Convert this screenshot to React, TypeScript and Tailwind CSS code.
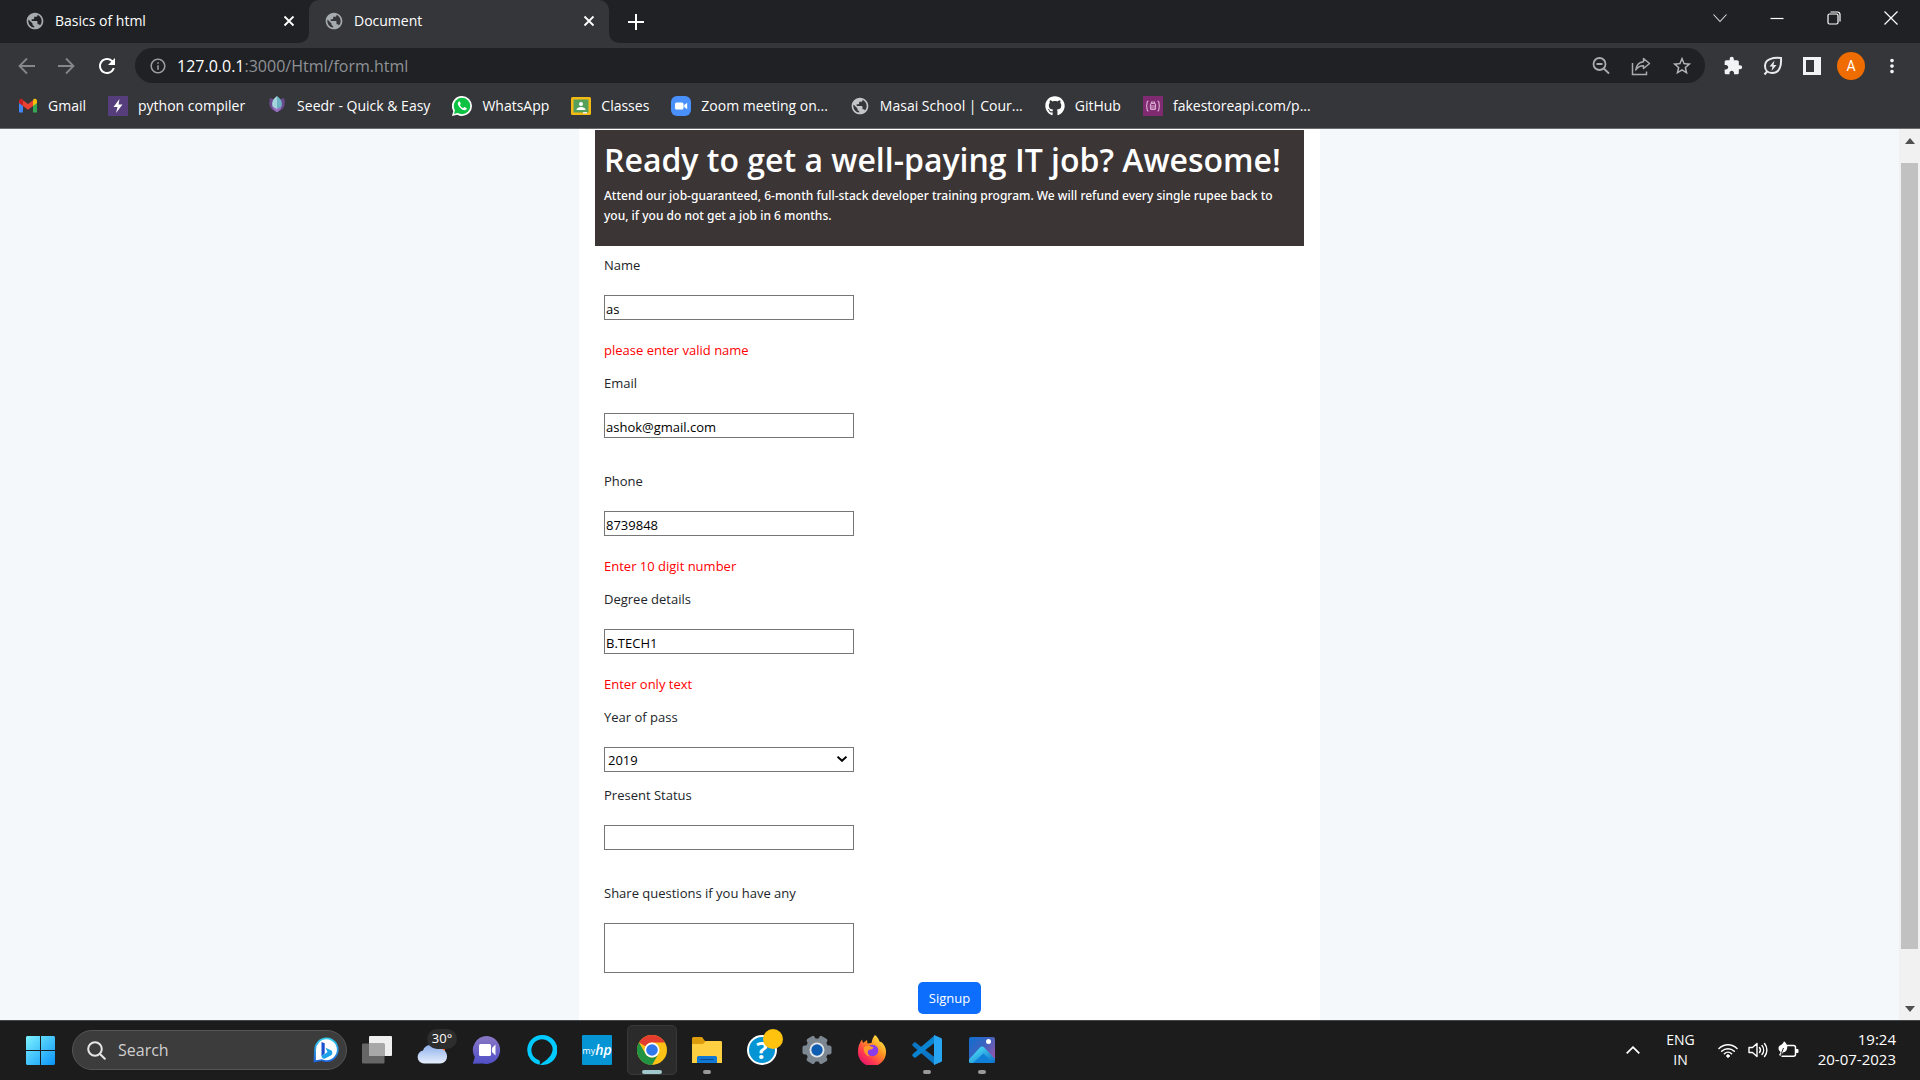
import type { ReactNode } from "react";
import { FaGithub } from "react-icons/fa";
import {
  MdExtension,
  MdInfoOutline,
  MdMoreVert,
  MdPublic,
  MdRefresh,
  MdStarOutline,
} from "react-icons/md";

/* ---------- Small drawings ---------- */

function CloseGlyph() {
  return (
    <svg viewBox="0 0 12 12" className="size-3" fill="none" stroke="#fff" strokeWidth="1.8">
      <path d="M1.5 1.5l9 9M10.5 1.5l-9 9" />
    </svg>
  );
}

function BackIcon({ flip = false }: { flip?: boolean }) {
  return (
    <svg viewBox="0 0 20 20" className={flip ? "size-5 rotate-180" : "size-5"} fill="none" stroke="#85878a" strokeWidth="1.8">
      <path d="M18 10H3M10 2.5L2.5 10l7.5 7.5" />
    </svg>
  );
}

function ZoomOutIcon() {
  return (
    <svg viewBox="0 0 20 20" className="size-5" fill="none" stroke="#a9abae" strokeWidth="1.8">
      <circle cx="8.500" cy="8" r="6" />
      <path d="M5.500 8h6M12.800 12.500l5.200 5" />
    </svg>
  );
}

function ShareIcon() {
  return (
    <svg viewBox="0 0 20 20" className="size-5" fill="none" stroke="#a9abae" strokeWidth="1.5">
      <path d="M1.5 7v11.5h14v-3" />
      <path d="M12.500 2.500l6 5-6 5V9.800c-3.500 0-6 1.200-7.700 4.200.4-4 2.900-7.800 7.700-8.300z" strokeLinejoin="round" />
    </svg>
  );
}

function LeafIcon() {
  return (
    <svg viewBox="0 0 20 20" className="size-5" fill="none" stroke="#e8eaed" strokeWidth="2">
      <path d="M18 2c-8-.6-16 .8-16 8 0 4.400 3 7 7 7 8 0 9.500-8 9-15zM4.500 15L1.500 18.500" />
      <path d="M11.500 4.500L6.500 10.500h3l-1 4.500 5-6h-3z" fill="#e8eaed" stroke="none" />
    </svg>
  );
}

function GmailIcon() {
  return (
    <svg viewBox="0 0 20 16" className="h-4 w-5">
      <path d="M1 3v11.500h4V6.500z" fill="#4285f4" />
      <path d="M19 3v11.500h-4V6.500z" fill="#34a853" />
      <path d="M15 3.200V8l4-3V3c0-2-2.200-2.900-3.600-1.800z" fill="#fbbc04" />
      <path d="M5 8V2.200l5 3.800 5-3.800V8l-5 3.800z" fill="#ea4335" />
      <path d="M1 3v2l4 3V1.800L4.600 1.200C3.200.1 1 1 1 3z" fill="#c5221f" />
    </svg>
  );
}

function PythonCompilerIcon() {
  return (
    <svg viewBox="0 0 20 20" className="size-5">
      <rect width="20" height="20" fill="#563d7c" />
      <path d="M11.500 3L5.500 11h4l-1.500 6 6.500-8.500h-4z" fill="#fff" />
    </svg>
  );
}

function SeedrIcon() {
  return (
    <svg viewBox="0 0 20 20" className="size-5">
      <path d="M3 2c-2 7 0 12 7 14 7-2 9-7 7-14l-3 1H6z" fill="#6a4a8c" />
      <path d="M10 0v16C3 11 4 4 10 0z" fill="#a5d5dc" />
      <path d="M10 0c6 4 7 11 0 16z" fill="#6fb4c4" />
      <path d="M5.500 10.500c.5 2.500 2 4.500 4.500 5.500 2.500-1 4-3 4.500-5.500L10 13z" fill="#9a6fc0" />
    </svg>
  );
}

function WhatsAppIcon() {
  return (
    <svg viewBox="0 0 20 20" className="size-5">
      <path d="M10 0a10 10 0 0 1 0 20c-1.700 0-3.300-.4-4.700-1.200L0 20l1.300-5A10 10 0 0 1 10 0z" fill="#fff" />
      <circle cx="10" cy="10" r="8.300" fill="#0dc143" />
      <path d="M3.500 12l-1.500 6 5-1.500z" fill="#0dc143" />
      <path d="M7 5.500c-1.800 1-1.500 3 .4 5.400 2 2.400 4.600 3.900 6.200 3.100 1.200-.6 1.400-1.700.9-2l-2-1c-.6-.2-1 1.200-1.400 1.100-1-.3-2.800-1.800-3.200-2.900-.1-.4 1-.9.8-1.500L8 5.700c-.2-.4-.7-.3-1-.2z" fill="#fff" />
    </svg>
  );
}

function ClassesIcon() {
  return (
    <svg viewBox="0 0 20 20" className="size-5">
      <rect y="1" width="20" height="18" rx="1.500" fill="#f5ba14" />
      <rect x="2.500" y="3.500" width="15" height="13" fill="#57a05c" />
      <circle cx="10" cy="8" r="2" fill="#fff" />
      <path d="M5.500 14c0-4 9-4 9 0z" fill="#fff" />
      <path d="M12 16h4v1.500h-4z" fill="#eee" />
    </svg>
  );
}

function ZoomIcon() {
  return (
    <svg viewBox="0 0 20 20" className="size-5">
      <rect width="20" height="20" rx="6" fill="#4a90fb" />
      <rect x="4" y="6.500" width="8.500" height="7" rx="1.500" fill="#fff" />
      <path d="M13.200 9l3-2.300v6.600l-3-2.300z" fill="#fff" />
    </svg>
  );
}

function FakeStoreIcon() {
  return (
    <svg viewBox="0 0 20 20" className="size-5">
      <rect width="20" height="20" fill="#7f2a71" />
      <g fill="none" stroke="#d9a9d1" strokeWidth="1.200">
        <path d="M5.500 5c-1.500 0-1.500 1-1.500 2.500S3.500 10 3 10c.5 0 1 1 1 2.500S4 15 5.500 15M14.500 5C16 5 16 6 16 7.500s.5 2.500 1 2.500c-.5 0-1 1-1 2.500S16 15 14.500 15" />
        <rect x="7.500" y="7.500" width="5" height="6" rx="1" />
        <path d="M8.500 7.500V6h3v1.500M8 10h4M8 12h4" />
      </g>
    </svg>
  );
}

function WindowsIcon() {
  return (
    <svg viewBox="0 0 29 29" className="size-[29px]">
      <defs>
        <linearGradient id="win" gradientUnits="userSpaceOnUse" x1="0" y1="0" x2="29" y2="29">
          <stop offset="0" stopColor="#7df3ff" />
          <stop offset="1" stopColor="#0a93f8" />
        </linearGradient>
      </defs>
      <path d="M1 0h13v14H0V1zM15 0h13l1 1v13H15zM0 15h14v14H1l-1-1zM15 15h14v13l-1 1H15z" fill="url(#win)" />
    </svg>
  );
}

function BingIcon() {
  return (
    <svg viewBox="0 0 26 26" className="size-[26px]">
      <defs>
        <linearGradient id="bing" x1="0" y1="0" x2="0" y2="1">
          <stop offset="0" stopColor="#35d0f0" />
          <stop offset="1" stopColor="#1c5fd6" />
        </linearGradient>
      </defs>
      <path d="M13.500.5a12.300 12.300 0 1 1-5 23.600L.5 25.500 1.200 13A12.300 12.300 0 0 1 13.500.5z" fill="url(#bing)" />
      <path d="M13.500 2.300a10.500 10.500 0 1 1-4.600 20l-6 1L3 13A10.500 10.500 0 0 1 13.500 2.300z" fill="#fff" />
      <path d="M8.500 5l3.200 1.300v10.200l-3.200 2.700z" fill="#1b4fd0" />
      <path d="M8.500 18.800l4-2.300 2-1.400-2-4.300 6 2.600c1.500 1.800 1 4-.7 5.200L12 21.500c-2 .7-3.500-.8-3.500-2.700z" fill="#1da1e8" />
    </svg>
  );
}

function TaskViewIcon() {
  return (
    <svg viewBox="0 0 30 30" className="size-[30px]">
      <rect x="7" y="1" width="23" height="20" rx="1" fill="#efefef" />
      <rect x="0" y="8.500" width="22.500" height="20" rx="1" fill="#666666" />
      <path d="M7 8.500h15.500V21H7z" fill="#a8a8a8" />
    </svg>
  );
}

function WeatherIcon() {
  return (
    <svg viewBox="0 0 30 30" className="size-[30px]">
      <defs>
        <linearGradient id="cloud" x1="0" y1="0" x2="0" y2="1">
          <stop offset="0" stopColor="#8fb0ec" />
          <stop offset="1" stopColor="#e6effc" />
        </linearGradient>
      </defs>
      <path d="M19 13h9v6h-9z" fill="#f7630c" />
      <path d="M7 28.500a6.500 6.500 0 0 1-1-12.900A8 8 0 0 1 20.500 14a7.500 7.500 0 0 1 9.500 7.500c0 4-3 7-7 7z" fill="url(#cloud)" />
    </svg>
  );
}

function ChatIcon() {
  return (
    <svg viewBox="0 0 30 30" className="size-[30px]">
      <defs>
        <linearGradient id="chat" x1="0" y1="0" x2="0" y2="1">
          <stop offset="0" stopColor="#8a78c4" />
          <stop offset="1" stopColor="#4f4fc8" />
        </linearGradient>
      </defs>
      <path d="M15 1a14 14 0 1 1-4.500 27.500L.8 28.800 2.800 22A14 14 0 0 1 15 1z" fill="url(#chat)" />
      <rect x="7" y="9" width="12" height="12" rx="1.500" fill="#fff" />
      <path d="M20 13l3.500-3.500v11L20 17z" fill="#fff" />
    </svg>
  );
}

function AlexaIcon() {
  return (
    <svg viewBox="0 0 30 30" className="size-[30px]">
      <path d="M15 0a15 15 0 0 0-2.200 29.800v-3.200c0-.8-.5-1.200-1.200-1.500A10.700 10.700 0 1 1 25.500 12.500c1 7-4.500 12-12.500 17.300A15 15 0 1 0 15 0z" fill="#00caff" />
    </svg>
  );
}

function ChromeIcon() {
  return (
    <svg viewBox="0 0 30 30" className="size-[30px]">
      <circle cx="15" cy="15" r="15" fill="#fbc116" />
      <path d="M15 0a15 15 0 0 1 13 7.500H15a7.500 7.500 0 0 0-6.500 3.700L2 7.500A15 15 0 0 1 15 0z" fill="#e33b2e" />
      <path d="M2 7.500l6.500 11.200A7.500 7.500 0 0 0 21.500 18.700L15 30A15 15 0 0 1 2 7.500z" fill="#229342" />
      <circle cx="15" cy="15" r="7.500" fill="#fff" />
      <circle cx="15" cy="15" r="5.800" fill="#2f77ea" />
    </svg>
  );
}

function ExplorerIcon() {
  return (
    <svg viewBox="0 0 30 30" className="size-[30px]">
      <path d="M0 3.500A1.500 1.500 0 0 1 1.500 2H10l3 4h15.500A1.500 1.500 0 0 1 30 7.500V12H0z" fill="#dc9c0c" />
      <path d="M0 9h11l3-3h14.500A1.500 1.500 0 0 1 30 7.500V28H0z" fill="#fdcf41" />
      <path d="M5 28v-5.500A1.500 1.500 0 0 1 6.500 21h17a1.500 1.500 0 0 1 1.500 1.500V28z" fill="#0f78d4" />
      <path d="M8.500 24.500h13" stroke="#0a4a8c" />
    </svg>
  );
}

function SettingsIcon() {
  return (
    <svg viewBox="0 0 30 30" className="size-[30px]">
      <g fill="#7d8791">
        <circle cx="15" cy="15" r="11.500" />
        <rect x="10.500" y="0.500" width="9" height="29" rx="2" transform="rotate(90 15 15)" />
        <rect x="10.500" y="0.500" width="9" height="29" rx="2" transform="rotate(30 15 15)" />
        <rect x="10.500" y="0.500" width="9" height="29" rx="2" transform="rotate(-30 15 15)" />
      </g>
      <circle cx="15" cy="15" r="7.500" fill="#e4e7ea" />
      <circle cx="15" cy="15" r="5.700" fill="#0f5db0" />
    </svg>
  );
}

function FirefoxIcon() {
  return (
    <svg viewBox="0 0 30 30" className="size-[30px]">
      <defs>
        <linearGradient id="fox" x1="1" y1="0" x2="0.200" y2="1">
          <stop offset="0.100" stopColor="#fff04a" />
          <stop offset="0.450" stopColor="#ff9020" />
          <stop offset="0.750" stopColor="#ff3850" />
          <stop offset="1" stopColor="#e01070" />
        </linearGradient>
      </defs>
      <path d="M18 0c2 1.500 4 4 4.500 6.500l2.500 1c3 3 4.200 6.500 4 10A14 14 0 0 1 1 17c-.2-4 .8-7.500 3-11l1-1.500L6 8l4-3 .5 3.500 4-.5C15 5 16 2 18 0z" fill="url(#fox)" />
      <circle cx="15.500" cy="15.500" r="5.800" fill="#8a3bea" />
      <path d="M7 12c3-1.500 6-1.500 9.500.5-1 2-3 2-5 2.500-1.500 3-.5 5 2 6.500-4 0-7.500-4-6.500-9.500z" fill="#ff9a28" />
    </svg>
  );
}

function VsCodeIcon() {
  return (
    <svg viewBox="0 0 30 30" className="size-[30px]">
      <path d="M1 8.500L3 7l20 15.500V30L.8 11c-.8-.8-.6-1.800.2-2.500z" fill="#0b76c4" />
      <path d="M1 21.500L3 23 23 7.500V0L.8 19c-.8.800-.6 1.800.2 2.500z" fill="#0a84d0" />
      <path d="M22 0l7 3c.6.300 1 .8 1 1.500v21c0 .7-.4 1.200-1 1.500l-7 3z" fill="#27a5f2" />
    </svg>
  );
}

function PhotosIcon() {
  return (
    <svg viewBox="0 0 30 30" className="size-[30px]">
      <defs>
        <linearGradient id="sky" x1="0" y1="0" x2="1" y2="0.800">
          <stop offset="0" stopColor="#0d6fd0" />
          <stop offset="0.500" stopColor="#3c62c0" />
          <stop offset="1" stopColor="#9a55a8" />
        </linearGradient>
        <linearGradient id="hill" x1="0" y1="0" x2="1" y2="1">
          <stop offset="0.200" stopColor="#48d6f6" />
          <stop offset="1" stopColor="#0b6cc4" />
        </linearGradient>
      </defs>
      <rect x="2" y="2" width="26" height="26" rx="2" fill="url(#sky)" />
      <path d="M2 24.500L13 12.500c1.300-1.400 3-1.400 4.300 0L28 24v2.500A1.500 1.500 0 0 1 26.500 28h-23A1.500 1.500 0 0 1 2 26.500z" fill="url(#hill)" />
      <path d="M6 28l10.500-9.500L26 28z" fill="#0f7fd8" />
      <circle cx="21.500" cy="6.500" r="2.500" fill="#fff" />
    </svg>
  );
}

function WifiIcon() {
  return (
    <svg viewBox="0 0 20 16" className="h-4 w-5" fill="none" stroke="#fff" strokeWidth="1.500" strokeLinecap="round">
      <path d="M1 6.500a12.700 12.700 0 0 1 18 0M3.700 9.200a9 9 0 0 1 12.600 0M6.400 11.800a5.200 5.200 0 0 1 7.200 0" />
      <circle cx="10" cy="14" r="1.300" fill="#fff" strokeWidth="1" />
    </svg>
  );
}

function SoundIcon() {
  return (
    <svg viewBox="0 0 20 18" className="h-[18px] w-5" fill="none" stroke="#fff" strokeWidth="1.400" strokeLinejoin="round" strokeLinecap="round">
      <path d="M1 6.500h3.500L9 2.500v13l-4.500-4H1z" />
      <path d="M11.500 6.500a4 4 0 0 1 0 5M14 4.500a7 7 0 0 1 0 9M16.500 2.500a10 10 0 0 1 0 13" />
    </svg>
  );
}

function BatteryIcon() {
  return (
    <svg viewBox="0 0 21 18" className="h-[18px] w-[21px]">
      <path d="M9 4.500h6.500a2 2 0 0 1 2 2v6.800a2 2 0 0 1-2 2H3.500" fill="none" stroke="#fff" strokeWidth="1.500" />
      <path d="M18 8h1.500a1 1 0 0 1 1 1v2a1 1 0 0 1-1 1H18z" fill="#fff" />
      <path d="M6 .3c2.500 2 3.800 4.500 3.200 7-.5 2.500-2 4-4.200 4.200L2.500 15 1 14l1.700-3C.3 9.500 0 6.500 1.200 5c1.800-.5 4-2.200 4.800-4.700z" fill="#fff" />
      <path d="M3 14.500c.5-3 1.500-5 2.500-7.500" fill="none" stroke="#1c1c1c" />
    </svg>
  );
}

/* ---------- Browser chrome ---------- */

function Tab({ title, active = false }: { title: string; active?: boolean }) {
  return (
    <div className={active ? "relative flex h-full w-[300px] items-center rounded-t-[10px] bg-[#35363a] pr-3 pb-0.5 pl-[15px]" : "flex h-full w-[309px] items-center pr-3 pb-0.5 pl-[25px]"}>
      {active && (
        <>
          <svg viewBox="0 0 10 10" className="absolute bottom-0 -left-2.5 size-2.5">
            <path d="M10 0v10H0A10 10 0 0 0 10 0z" fill="#35363a" />
          </svg>
          <svg viewBox="0 0 10 10" className="absolute -right-2.5 bottom-0 size-2.5">
            <path d="M0 0v10h10A10 10 0 0 1 0 0z" fill="#35363a" />
          </svg>
        </>
      )}
      <MdPublic className="size-5 shrink-0 text-[#a6abb0]" />
      <span className="ml-2.5 flex-1 truncate">{title}</span>
      <button type="button" aria-label={`Close ${title}`} className="p-0.5">
        <CloseGlyph />
      </button>
    </div>
  );
}

function TabStrip() {
  return (
    <div className="flex h-[43px] items-center bg-[#202124] text-sm text-white">
      <Tab title="Basics of html" />
      <Tab title="Document" active />
      <button type="button" aria-label="New tab" className="ml-[19px]">
        <svg viewBox="0 0 16 16" className="size-4" stroke="#fff" strokeWidth="2">
          <path d="M8 0v16M0 8h16" />
        </svg>
      </button>
      <div className="mb-[7px] ml-auto flex items-center">
        <button type="button" aria-label="Search tabs" className="flex w-[57px] justify-center">
          <svg viewBox="0 0 14 14" className="size-3.5" fill="none" stroke="#ddd" strokeWidth="1.100">
            <path d="M.5 3.500L7 10.500l6.500-7" />
          </svg>
        </button>
        <button type="button" aria-label="Minimize" className="flex w-[57px] justify-center">
          <svg viewBox="0 0 14 14" className="size-3.5" fill="none" stroke="#fff" strokeWidth="1.200">
            <path d="M.5 7.500h13" />
          </svg>
        </button>
        <button type="button" aria-label="Restore" className="flex w-[57px] justify-center">
          <svg viewBox="0 0 14 14" className="size-3.5" fill="none" stroke="#fff" strokeWidth="1.200">
            <rect x="1" y="3" width="10" height="10" rx="1.500" />
            <path d="M3.500 1h7A2.500 2.500 0 0 1 13 3.500v7" />
          </svg>
        </button>
        <button type="button" aria-label="Close window" className="flex w-[58px] justify-center">
          <svg viewBox="0 0 14 14" className="size-3.5" fill="none" stroke="#fff" strokeWidth="1.200">
            <path d="M.5.5l13 13M13.500.5l-13 13" />
          </svg>
        </button>
      </div>
    </div>
  );
}

function AddressBar() {
  return (
    <div className="flex items-center px-[17px] py-[5px]">
      <div className="flex items-center gap-[19px]">
        <button type="button" aria-label="Back"><BackIcon /></button>
        <button type="button" aria-label="Forward"><BackIcon flip /></button>
        <button type="button" aria-label="Reload">
          <MdRefresh className="size-6 text-white" />
        </button>
      </div>
      <div className="ml-4 flex h-[35px] flex-1 items-center rounded-full bg-[#202124] pr-3 pl-3.5">
        <MdInfoOutline className="size-[18px] text-[#9aa0a6]" />
        <span className="ml-2.5 flex-1 text-base text-[#8f9296]">
          <span className="text-white">127.0.0.1</span>:3000/Html/form.html
        </span>
        <div className="flex items-center gap-5 text-[#b4b6b9]">
          <button type="button" aria-label="Zoom out"><ZoomOutIcon /></button>
          <button type="button" aria-label="Share"><ShareIcon /></button>
          <button type="button" aria-label="Bookmark"><MdStarOutline className="size-[22px]" /></button>
        </div>
      </div>
      <div className="ml-[18px] flex items-center gap-5 text-[#f1f3f4]">
        <button type="button" aria-label="Extensions"><MdExtension className="size-5" /></button>
        <button type="button" aria-label="Energy saver"><LeafIcon /></button>
        <button type="button" aria-label="Side panel">
          <svg viewBox="0 0 18 18" className="size-[18px]">
            <path d="M0 0h18v18H0zM3 3v12h8V3z" fill="currentColor" fillRule="evenodd" />
          </svg>
        </button>
        <button type="button" aria-label="Profile" className="-mx-1 flex size-7 items-center justify-center rounded-full bg-[#ef6c00] font-['Roboto',sans-serif] text-sm text-white">
          A
        </button>
        <button type="button" aria-label="Menu"><MdMoreVert className="size-[22px]" /></button>
      </div>
    </div>
  );
}

const bookmarks: { label: string; icon: ReactNode }[] = [
  { label: "Gmail", icon: <GmailIcon /> },
  { label: "python compiler", icon: <PythonCompilerIcon /> },
  { label: "Seedr - Quick & Easy", icon: <SeedrIcon /> },
  { label: "WhatsApp", icon: <WhatsAppIcon /> },
  { label: "Classes", icon: <ClassesIcon /> },
  { label: "Zoom meeting on...", icon: <ZoomIcon /> },
  { label: "Masai School | Cour...", icon: <MdPublic className="size-5 text-[#c3c6c9]" /> },
  { label: "GitHub", icon: <FaGithub className="size-5 text-white" /> },
  { label: "fakestoreapi.com/p...", icon: <FakeStoreIcon /> },
];

function BookmarksBar() {
  return (
    <nav aria-label="Bookmarks" className="flex h-[41px] items-center gap-[22px] border-b border-[#6b6c6f] pr-4 pb-1 pl-[18px]">
      {bookmarks.map((b) => (
        <a key={b.label} href="#" className="flex items-center gap-2.5 text-sm whitespace-nowrap text-white">
          <span className="flex w-5 justify-center">{b.icon}</span>
          {b.label}
        </a>
      ))}
    </nav>
  );
}

/* ---------- Form page ---------- */

const boxClass = "mt-5 h-[25px] w-[250px] border border-[#767676] bg-white px-px pt-0.5 text-[13px] text-black outline-none";

function TextField({ id, label, value, error = "" }: { id: string; label: string; value: string; error?: string }) {
  return (
    <div className="mb-[13px] flex flex-col items-start">
      <label htmlFor={id}>{label}</label>
      <input id={id} type="text" defaultValue={value} className={boxClass} />
      <p className="mt-5 text-[#ff0000]">{error}</p>
    </div>
  );
}

function SignupPage() {
  return (
    <main className="flex flex-1 justify-center overflow-hidden bg-[#f4f8fb]">
      <div className="w-[741px] bg-white px-4 pt-px pb-[5px]">
        <header className="bg-[#3b3535] px-[9px] pt-2.5 pb-5 text-white">
          <h1 className="text-[32px] leading-10 font-semibold whitespace-nowrap">Ready to get a well-paying IT job? Awesome!</h1>
          <p className="mt-1.5 font-['Noto_Sans',sans-serif] text-xs leading-5 font-medium">
            Attend our job-guaranteed, 6-month full-stack developer training program. We will refund every single rupee back to
            <br />
            you, if you do not get a job in 6 months.
          </p>
        </header>
        <form className="px-[9px] pt-[9px] text-[13px] leading-5 text-[#212529]" onSubmit={(e) => e.preventDefault()}>
          <TextField id="name" label="Name" value="as" error="please enter valid name" />
          <TextField id="email" label="Email" value="ashok@gmail.com" />
          <TextField id="phone" label="Phone" value="8739848" error="Enter 10 digit number" />
          <TextField id="degree" label="Degree details" value="B.TECH1" error="Enter only text" />
          <div className="mb-[13px]">
            <label htmlFor="year" className="block">Year of pass</label>
            <div className="relative w-[250px]">
              <select id="year" defaultValue="2019" className="mt-5 block h-[25px] w-full appearance-none border border-[#767676] bg-white px-[3px] text-[13px] text-black outline-none">
                <option>2019</option>
                <option>2020</option>
                <option>2021</option>
              </select>
              <svg viewBox="0 0 10 6" className="pointer-events-none absolute right-[7px] bottom-[10px] h-1.5 w-2.5" fill="none" stroke="#000" strokeWidth="2">
                <path d="M.5.7L5 4.800 9.500.7" />
              </svg>
            </div>
          </div>
          <TextField id="status" label="Present Status" value="" />
          <label htmlFor="questions" className="block">Share questions if you have any</label>
          <textarea id="questions" className="mt-5 block h-[50px] w-[250px] resize-none border border-[#767676] bg-white p-0.5 text-[13px] text-black outline-none" />
          <button type="submit" className="mx-auto mt-[9px] block h-8 rounded-[5px] bg-[#0d6efd] px-[11px] text-[13px] text-white">
            Signup
          </button>
        </form>
      </div>
    </main>
  );
}

function Scrollbar() {
  return (
    <div aria-hidden="true" className="flex w-[21px] flex-col items-center bg-[#f1f1f1] py-2">
      <svg viewBox="0 0 10 6" className="mt-px h-1.5 w-2.5"><path d="M5 0l5 6H0z" fill="#505050" /></svg>
      <div className="mt-[19px] mb-[57px] w-[17px] flex-1 bg-[#c1c1c1]" />
      <svg viewBox="0 0 10 6" className="h-1.5 w-2.5"><path d="M5 6L0 0h10z" fill="#505050" /></svg>
    </div>
  );
}

/* ---------- Taskbar ---------- */

function TaskButton({ label, children, state }: { label: string; children: ReactNode; state?: "active" | "open" }) {
  return (
    <button
      type="button"
      aria-label={label}
      className={state === "active" ? "relative flex size-[50px] items-center justify-center rounded-[5px] border border-[#383838] bg-[#2b2b2b]" : "relative flex size-[50px] items-center justify-center"}
    >
      {children}
      {state === "active" && <span className="absolute bottom-0 h-1 w-5 rounded-full bg-[#a0c8cc]" />}
      {state === "open" && <span className="absolute bottom-px h-1 w-2 rounded-full bg-[#999999]" />}
    </button>
  );
}

function Taskbar() {
  return (
    <footer className="flex h-[60px] items-center border-t border-[#44474a] bg-[#1c1c1c] pr-6 pb-px pl-[15px] text-white">
      <TaskButton label="Start"><WindowsIcon /></TaskButton>
      <label className="ml-[7px] flex h-10 w-[275px] items-center rounded-full border border-[#555555] bg-[#3c3c3c] pr-[7px] pl-3.5">
        <svg viewBox="0 0 19 19" className="size-[19px]" fill="none" stroke="#e6e6e6" strokeWidth="2" strokeLinecap="round">
          <circle cx="8" cy="8" r="6.800" />
          <path d="M13 13l4.800 4.800" />
        </svg>
        <input type="text" aria-label="Search" placeholder="Search" className="ml-3 w-0 flex-1 bg-transparent text-base outline-none placeholder:text-[#cfcfcf]" />
        <BingIcon />
      </label>
      <div className="ml-[5px] flex gap-[5px]">
        <TaskButton label="Task view"><TaskViewIcon /></TaskButton>
        <TaskButton label="Weather">
          <WeatherIcon />
          <span className="absolute top-1 right-0 flex h-5 w-[30px] items-center justify-center rounded-full bg-[#2d2d2d] text-[13px]">30°</span>
        </TaskButton>
        <TaskButton label="Chat"><ChatIcon /></TaskButton>
        <TaskButton label="Alexa"><AlexaIcon /></TaskButton>
        <TaskButton label="myHP">
          <span className="flex size-[30px] items-center justify-center rounded-[1px] bg-[#0594d4] text-[9px] leading-none">
            my<b className="text-sm leading-none font-semibold italic">hp</b>
          </span>
        </TaskButton>
        <TaskButton label="Chrome" state="active"><ChromeIcon /></TaskButton>
        <TaskButton label="File Explorer" state="open"><ExplorerIcon /></TaskButton>
        <TaskButton label="Help">
          <span className="flex size-[30px] items-center justify-center rounded-full border-2 border-white bg-[#0594d4] text-2xl leading-none font-bold">?</span>
          <span className="absolute top-1 right-1 size-5 rounded-full bg-[#ffc20e]" />
        </TaskButton>
        <TaskButton label="Settings"><SettingsIcon /></TaskButton>
        <TaskButton label="Firefox"><FirefoxIcon /></TaskButton>
        <TaskButton label="VS Code" state="open"><VsCodeIcon /></TaskButton>
        <TaskButton label="Photos" state="open"><PhotosIcon /></TaskButton>
      </div>
      <div className="ml-auto flex items-center text-[15px] leading-5">
        <button type="button" aria-label="Show hidden icons">
          <svg viewBox="0 0 14 8" className="h-2 w-3.5" fill="none" stroke="#fff" strokeWidth="1.800">
            <path d="M.7 7.300L7 1.200l6.300 6.100" />
          </svg>
        </button>
        <div className="ml-[26px] text-center text-sm leading-5">
          ENG
          <br />
          IN
        </div>
        <div className="ml-[23px] flex items-center gap-2.5">
          <WifiIcon />
          <SoundIcon />
          <BatteryIcon />
        </div>
        <time className="ml-[19px] pb-[3px] text-right">
          19:24
          <br />
          20-07-2023
        </time>
      </div>
    </footer>
  );
}

export default function App() {
  return (
    <div className="flex min-h-screen flex-col bg-[#35363a] font-['Open_Sans',sans-serif]">
      <TabStrip />
      <AddressBar />
      <BookmarksBar />
      <div className="flex flex-1">
        <SignupPage />
        <Scrollbar />
      </div>
      <Taskbar />
    </div>
  );
}
